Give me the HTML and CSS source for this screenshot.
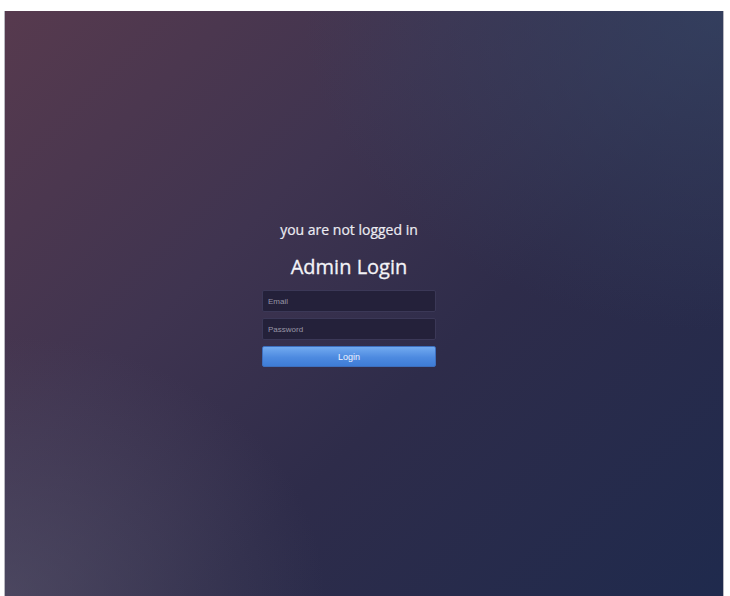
FILE: index.html
```html
<!DOCTYPE html>
<html>
<head>
<meta charset="utf-8">
<link rel="stylesheet" href="styles.css">
</head>
<body>
<div class="frame">
  <div class="login">
    <p class="status">you are not logged in</p>
    <h1 class="title">Admin Login</h1>
    <input class="field" type="text" placeholder="Email">
    <input class="field" type="password" placeholder="Password">
    <button class="btn">Login</button>
  </div>
</div>
</body>
</html>
```
FILE: styles.css
```css
html, body { margin: 0; padding: 0; background: #ffffff; }
.frame {
  margin: 11px 6px 0 4px;
  height: 585px;
  border-left: 1px solid #b8b8c0;
  border-right: 1px solid #b8b8c0;
  background:
    radial-gradient(ellipse 420px 320px at 100% 0%, rgba(52,68,100,0.75), rgba(52,68,100,0) 100%),
    radial-gradient(ellipse 320px 260px at 0% 100%, rgba(90,88,110,0.55), rgba(90,88,110,0) 100%),
    linear-gradient(135deg, #573a4e 0%, #3f3450 35%, #2e2c4a 60%, #1f2a4d 100%);
  display: flex;
  flex-direction: column;
  align-items: center;
  padding-right: 30px;
  box-sizing: border-box;
}
.login {
  margin-top: 209px;
  width: 174px;
  display: flex;
  flex-direction: column;
  align-items: stretch;
  font-family: "Open Sans", sans-serif;
}
.status {
  margin: 0;
  text-align: center;
  color: #ececf2;
  font-size: 14px;
  line-height: 20px;
  white-space: nowrap;
  -webkit-text-stroke: 0.2px #ececf2;
}
.title {
  margin: 13px 0 0;
  text-align: center;
  color: #f3f3f7;
  font-size: 20px;
  font-weight: 400;
  line-height: 28px;
  white-space: nowrap;
  -webkit-text-stroke: 0.3px #f3f3f7;
}
.field {
  margin-top: 9px;
  height: 22px;
  box-sizing: border-box;
  background: #24213a;
  border: 1px solid #3b3857;
  border-radius: 2px;
  padding: 0 5px;
  font-family: "Liberation Sans", Arial, sans-serif;
  font-size: 8px;
  color: #ddd;
  outline: none;
}
.field + .field { margin-top: 6px; }
.field::placeholder { color: #9896a6; }
.btn {
  margin-top: 6px;
  height: 21px;
  border: 1px solid #3d6fbf;
  border-radius: 2px;
  background: linear-gradient(to bottom, #72aaf0 0%, #4d8ae0 55%, #3e7cd6 100%);
  color: #eef3ff;
  font-family: "Liberation Sans", Arial, sans-serif;
  font-size: 9px;
  padding: 0;
}
```
